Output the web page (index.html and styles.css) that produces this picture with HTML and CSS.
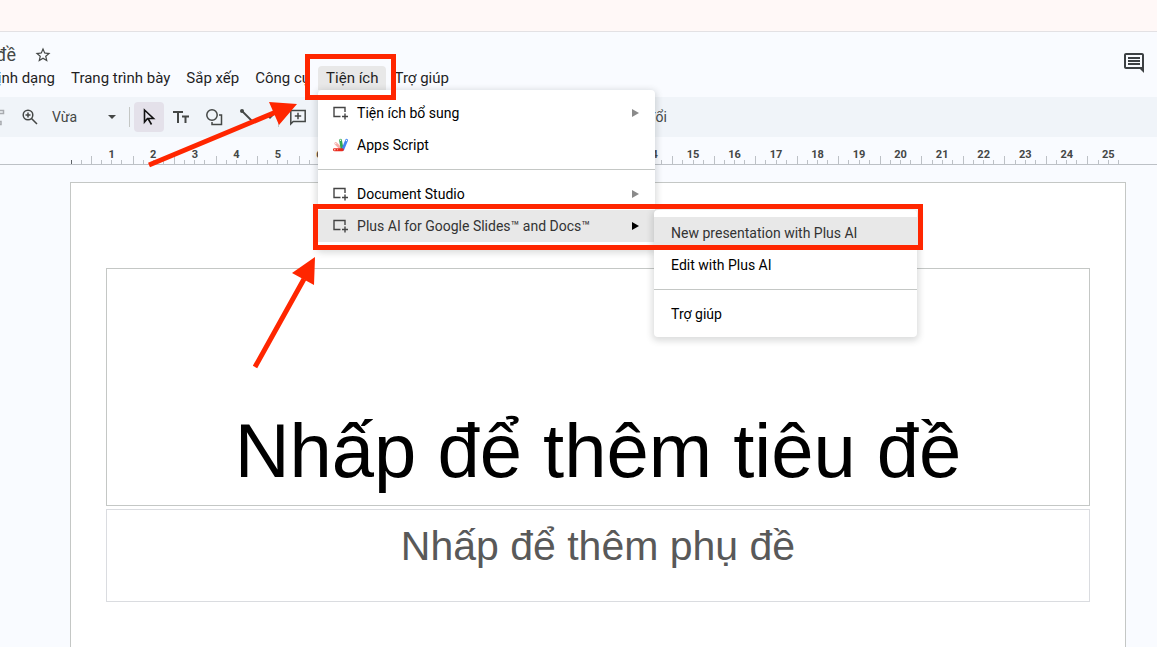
FILE: index.html
```
<!DOCTYPE html>
<html lang="vi">
<head>
    <meta charset="UTF-8">
    <meta name="viewport" content="width=device-width, initial-scale=1.0">
    <title>Bản trình bày không có tiêu đề</title>
    <link rel="stylesheet" href="styles.css">
</head>
<body>
    <div class="browser-bar"></div>

    <header class="header">
        <div class="header-main">
            <div class="title-row">
                <span class="doc-title">đề</span>
                <button class="icon-button" aria-label="Gắn dấu sao">
                    <svg width="18" height="18" viewBox="0 0 24 24" fill="#444746"><path d="M22 9.24l-7.19-.62L12 2 9.19 8.63 2 9.24l5.46 4.73L5.82 21 12 17.27 18.18 21l-1.63-7.03L22 9.24zM12 15.4l-3.76 2.27 1-4.28-3.32-2.88 4.38-.38L12 6.1l1.71 4.04 4.38.38-3.32 2.88 1 4.28L12 15.4z"/></svg>
                </button>
            </div>
            <nav class="menubar">
                <button class="menubar-item clipped">Định dạng</button>
                <button class="menubar-item">Trang trình bày</button>
                <button class="menubar-item">Sắp xếp</button>
                <button class="menubar-item">Công cụ</button>
                <div class="menu-anchor">
                    <button class="menubar-item open">Tiện ích</button>
                    <div class="menu">
                        <button class="menu-item">
                            <svg class="addon-icon" width="16" height="14" viewBox="0 0 16 14"><path d="M8 10.500H1.500V1.500H12.500V6M12.500 7.500V13.500M9.500 10.500H15.500"/></svg>
                            <span>Tiện ích bổ sung</span>
                            <span class="arrow"></span>
                        </button>
                        <button class="menu-item">
                            <svg width="18" height="16" viewBox="0 0 18 16">
                                <g fill="none" stroke-linecap="round" stroke-width="3">
                                    <path stroke="#f6aea9" d="M4 6.500L9 11.500"/>
                                    <path stroke="#34a853" d="M9 3L10.500 11"/>
                                    <path stroke="#4285f4" d="M15.500 3L11.500 12.500"/>
                                    <path stroke="#ea2a1c" d="M2.500 13H11"/>
                                </g>
                                <g fill="#fff"><circle cx="4" cy="6.500" r=".7"/><circle cx="9" cy="3" r=".7"/><circle cx="15.300" cy="3.200" r=".7"/><circle cx="3" cy="13" r=".7"/><circle cx="6" cy="13" r=".5"/></g>
                            </svg>
                            <span>Apps Script</span>
                        </button>
                        <hr class="menu-line">
                        <button class="menu-item">
                            <svg class="addon-icon" width="16" height="14" viewBox="0 0 16 14"><path d="M8 10.500H1.500V1.500H12.500V6M12.500 7.500V13.500M9.500 10.500H15.500"/></svg>
                            <span>Document Studio</span>
                            <span class="arrow"></span>
                        </button>
                        <div class="menu-anchor">
                            <button class="menu-item active">
                                <svg class="addon-icon" width="16" height="14" viewBox="0 0 16 14"><path d="M8 10.500H1.500V1.500H12.500V6M12.500 7.500V13.500M9.500 10.500H15.500"/></svg>
                                <span>Plus AI for Google Slides™ and Docs™</span>
                                <span class="arrow"></span>
                            </button>
                            <div class="menu submenu">
                                <button class="menu-item active">New presentation with Plus AI</button>
                                <button class="menu-item">Edit with Plus AI</button>
                                <hr class="menu-line">
                                <button class="menu-item">Trợ giúp</button>
                            </div>
                        </div>
                    </div>
                </div>
                <button class="menubar-item">Trợ giúp</button>
            </nav>
        </div>
        <button class="icon-button" aria-label="Nhận xét">
            <svg width="24" height="24" viewBox="0 0 24 24" fill="#3c4043"><path d="M21.990 4c0-1.100-.89-2-1.990-2H4c-1.100 0-2 .9-2 2v12c0 1.100.9 2 2 2h14l4 4-.01-18zM20 4v12H4V4h16zM6 12h12v2H6v-2zm0-3h12v2H6V9zm0-3h12v2H6V6z"/></svg>
        </button>
    </header>

    <div class="toolbar">
        <button class="tool tool-paint" aria-label="Sao chép định dạng">
            <svg width="8" height="20" viewBox="0 0 8 20" fill="none" stroke="#a8abb0" stroke-width="1.500"><path d="M0 3.500H3.500V6.500H0M0 14.500H1V17.500H0"/></svg>
        </button>
        <button class="tool" aria-label="Thu phóng">
            <svg width="18" height="18" viewBox="0 0 18 18" fill="none" stroke="#444746" stroke-width="1.500"><circle cx="7" cy="7" r="4.800"/><path d="M10.500 10.500L16 16M4.500 7H9.500M7 4.500V9.500"/></svg>
        </button>
        <button class="zoom-select"><span>Vừa</span><span class="caret"></span></button>
        <span class="divider"></span>
        <button class="tool selected" aria-label="Chọn">
            <svg width="18" height="18" viewBox="0 0 18 18" fill="none" stroke="#111" stroke-width="1.600"><path d="M4.500 2V14L7.500 10.500H13.500ZM8 10.500L11.500 16.500"/></svg>
        </button>
        <button class="tool" aria-label="Hộp văn bản">
            <svg width="18" height="18" viewBox="0 0 18 18" fill="none" stroke="#444746" stroke-width="2"><path d="M0 4H10M5 4V15M9 8.500H16M12.500 8.500V15"/></svg>
        </button>
        <button class="tool" aria-label="Hình dạng">
            <svg width="18" height="18" viewBox="0 0 18 18" fill="none" stroke="#444746" stroke-width="1.500"><circle cx="6" cy="7" r="5.200"/><path d="M13 7H15.500V16.500H6V14"/></svg>
        </button>
        <button class="tool" aria-label="Đường kẻ">
            <svg width="18" height="18" viewBox="0 0 18 18"><path d="M3 3L15 15" stroke="#444746" stroke-width="1.800"/><circle cx="3" cy="3" r="2" fill="#444746"/></svg>
        </button>
        <span class="caret line-caret"></span>
        <span class="divider"></span>
        <button class="tool" aria-label="Thêm nhận xét">
            <svg width="18" height="18" viewBox="0 0 18 18" fill="none" stroke="#444746" stroke-width="1.500"><path d="M1.800 16V2.500H16.200V13.500H4.200ZM9 4.800V11.200M5.800 8H12.200"/></svg>
        </button>
        <button class="transition-button">Chuyển đổi</button>
    </div>

    <div class="ruler">
        <div class="ruler-start"></div>
        <div class="ruler-units" id="ruler-units"></div>
    </div>

    <main class="workspace">
        <div class="slide">
            <div class="placeholder title-box">Nhấp để thêm tiêu đề</div>
            <div class="placeholder subtitle-box">Nhấp để thêm phụ đề</div>
        </div>
    </main>

    <svg class="annotations" width="924" height="380" viewBox="0 0 924 380">
        <g fill="none" stroke="#ff2600" stroke-width="5">
            <rect x="307.500" y="56.500" width="86" height="41"/>
            <rect x="315.500" y="206.500" width="605" height="41"/>
            <path d="M149 165L276 112M255 367L304 279"/>
        </g>
        <path fill="#ff2600" d="M297 104L269 102L279 125ZM315 257L292 273L314 285Z"/>
    </svg>

    <script>
        const units = document.getElementById('ruler-units');
        for (let i = 1; i <= 25; i++) {
            const unit = document.createElement('span');
            unit.className = 'ruler-unit';
            unit.textContent = i;
            units.appendChild(unit);
        }
    </script>
</body>
</html>
```
FILE: styles.css
```
:root {
    --page-bg: #f9fbff;
    --toolbar-bg: #f0f4f9;
    --line: #c4c7c5;
    --hover-bg: #e8e8e8;
    --text-color: #1f1f1f;
    --icon-color: #444746;
}

* {
    box-sizing: border-box;
}

body {
    margin: 0;
    height: 100vh;
    display: flex;
    flex-direction: column;
    overflow: hidden;
    position: relative;
    background-color: var(--page-bg);
    color: var(--text-color);
    font-family: Roboto, "Liberation Sans", sans-serif;
    font-size: 14px;
}

button {
    font: inherit;
    color: inherit;
    background: none;
    border: none;
    padding: 0;
    white-space: nowrap;
    cursor: pointer;
}

svg {
    display: block;
    flex: none;
}

.browser-bar {
    height: 32px;
    flex: none;
    background-color: #fff8f7;
    border-bottom: 1px solid #e3e1e4;
}

.header {
    display: flex;
    justify-content: space-between;
    align-items: flex-start;
    padding: 12px 11px 7px 0;
}

.header > .icon-button {
    padding-top: 7px;
}

.title-row {
    display: flex;
    align-items: center;
    gap: 18px;
    height: 22px;
}

.doc-title {
    display: flex;
    justify-content: flex-end;
    width: 16px;
    overflow: hidden;
    font-size: 18px;
    line-height: 22px;
    white-space: nowrap;
    color: var(--icon-color);
}

.menubar {
    display: flex;
}

.menubar-item {
    height: 24px;
    padding: 0 8px;
    border-radius: 4px;
    font-size: 15px;
    line-height: 24px;
}

.menubar-item.clipped {
    display: flex;
    justify-content: flex-end;
    width: 63px;
    overflow: hidden;
}

.menubar-item.open {
    background-color: var(--hover-bg);
    border-radius: 4px 4px 0 0;
}

.menu-anchor {
    position: relative;
}

.menu {
    position: absolute;
    top: 100%;
    left: 0;
    z-index: 2;
    width: 337px;
    padding: 7px 0;
    background-color: #fff;
    border-radius: 4px;
    box-shadow: 0 2px 6px 2px rgba(60, 64, 67, 0.18);
    color: #000;
}

.submenu {
    top: 0;
    left: 336px;
    width: 263px;
}

.menu-item {
    display: flex;
    align-items: center;
    gap: 8px;
    width: 100%;
    height: 32px;
    padding: 0 16px 0 14px;
    text-align: left;
}

.menu-item > svg {
    width: 17px;
}

.submenu .menu-item {
    padding-left: 17px;
}

.menu-item.active {
    background-color: var(--hover-bg);
    color: #333;
}

.addon-icon {
    fill: none;
    stroke: #444;
    stroke-width: 1.4;
}

.arrow {
    margin-left: auto;
    border-left: 7px solid #8a8a8a;
    border-top: 4px solid transparent;
    border-bottom: 4px solid transparent;
}

.active .arrow {
    border-left-color: #000;
}

.menu-line {
    margin: 8px 0;
    border: none;
    border-top: 1px solid var(--line);
}

.toolbar {
    display: flex;
    align-items: center;
    height: 40px;
    flex: none;
    background-color: var(--toolbar-bg);
    color: var(--icon-color);
}

.tool {
    display: flex;
    align-items: center;
    justify-content: center;
    width: 30px;
    height: 30px;
    margin-right: 3px;
    border-radius: 4px;
}

.tool-paint {
    justify-content: flex-start;
    width: 12px;
}

.tool.selected {
    background-color: #e4e1ea;
}

.zoom-select {
    display: flex;
    align-items: center;
    justify-content: space-between;
    width: 64px;
    margin: 0 13px 0 4px;
}

.caret {
    border-top: 4px solid var(--icon-color);
    border-left: 4px solid transparent;
    border-right: 4px solid transparent;
}

.divider {
    width: 1px;
    height: 20px;
    margin-right: 4px;
    background-color: var(--line);
}

.line-caret {
    margin-right: 4px;
}

.transition-button {
    width: 351px;
    text-align: right;
}

.ruler {
    display: flex;
    height: 28px;
    flex: none;
    padding: 0 28px 0 71px;
    border-bottom: 1px solid #bdc1c6;
}

.ruler-start {
    width: 20px;
    background:
        linear-gradient(#5f6368, #5f6368) 0 100% / 1px 4px no-repeat,
        linear-gradient(#bdc1c6, #bdc1c6) 10px 100% / 1px 4px no-repeat;
}

.ruler-units {
    flex: 1;
    display: grid;
    grid-template-columns: repeat(25, 1fr);
}

.ruler-unit {
    --tick: linear-gradient(#bdc1c6, #bdc1c6);
    padding-top: 10px;
    text-align: center;
    font-size: 11px;
    font-weight: bold;
    line-height: 15px;
    color: var(--icon-color);
    background:
        var(--tick) 0 100% / 1px 8px no-repeat,
        var(--tick) 25% 100% / 1px 4px no-repeat,
        var(--tick) 50% 100% / 1px 4px no-repeat,
        var(--tick) 75% 100% / 1px 4px no-repeat;
}

.workspace {
    flex: 1;
    display: flex;
    padding: 17px 31px 0 70px;
}

.slide {
    flex: 1;
    padding: 85px 35px 0;
    background-color: #fff;
    border: 1px solid var(--line);
    border-bottom: none;
}

.placeholder {
    border: 1px solid var(--line);
    font-family: "Liberation Sans", Arial, sans-serif;
    text-align: center;
}

.title-box {
    padding: 140px 0 12px;
    margin-bottom: 3px;
    font-size: 76px;
    line-height: 84px;
    color: #000;
}

.subtitle-box {
    padding: 12px 0 31px;
    border-color: #dadce0;
    font-size: 41px;
    line-height: 48px;
    color: #595959;
}

.annotations {
    position: absolute;
    top: 0;
    left: 0;
    z-index: 3;
    pointer-events: none;
}
```
